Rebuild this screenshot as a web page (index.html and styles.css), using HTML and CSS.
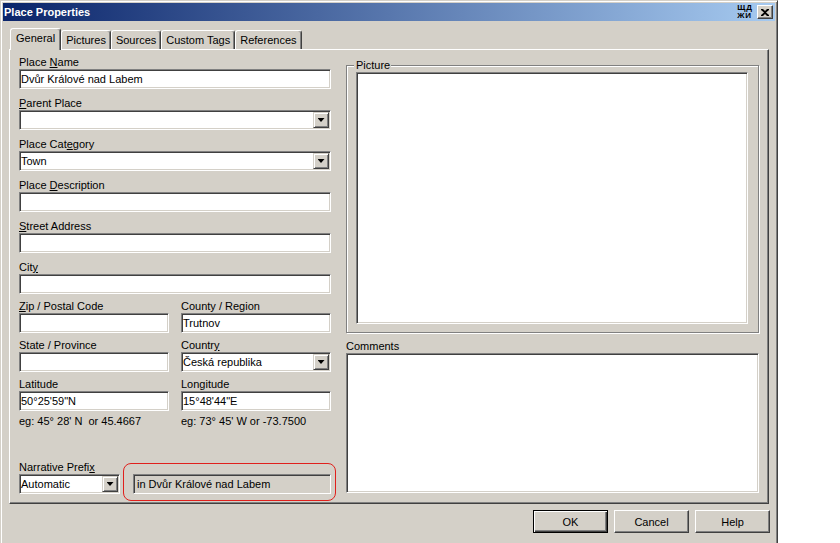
FILE: index.html
```
<!DOCTYPE html>
<html lang="en">

<head>
  <meta charset="UTF-8">
  <title>Place Properties</title>
  <link rel="stylesheet" href="styles.css">
</head>

<body>
  <div class="window">
    <div class="titlebar">
      <span class="title-text">Place Properties</span>
      <span class="ime"><span>ЩД</span><span>ЖИ</span></span>
      <span class="close-btn">
        <svg width="8" height="7" viewBox="0 0 8 7"><path d="M0 0h2l2 2 2-2h2v1L5 3.5 8 6v1H6L4 5 2 7H0V6l3-2.5L0 1z" fill="#000"/></svg>
      </span>
    </div>

    <div class="dialog-body">
      <div class="tabs">
        <div class="tab tab-active">General</div>
        <div class="tab">Pictures</div>
        <div class="tab">Sources</div>
        <div class="tab">Custom Tags</div>
        <div class="tab">References</div>
      </div>

      <div class="panel">
        <div class="col-left">
          <div class="field">
            <span class="label">Place <u>N</u>ame</span>
            <input class="edit" type="text" value="Dvůr Králové nad Labem">
          </div>
          <div class="field">
            <span class="label"><u>P</u>arent Place</span>
            <div class="combo"><span class="combo-value"></span><span class="drop"></span></div>
          </div>
          <div class="field">
            <span class="label">Place Cat<u>e</u>gory</span>
            <div class="combo"><span class="combo-value">Town</span><span class="drop"></span></div>
          </div>
          <div class="field">
            <span class="label">Place <u>D</u>escription</span>
            <input class="edit" type="text" value="">
          </div>
          <div class="field">
            <span class="label"><u>S</u>treet Address</span>
            <input class="edit" type="text" value="">
          </div>
          <div class="field">
            <span class="label">Cit<u>y</u></span>
            <input class="edit" type="text" value="">
          </div>

          <div class="pair">
            <div class="half">
              <span class="label"><u>Z</u>ip / Postal Code</span>
              <input class="edit" type="text" value="">
            </div>
            <div class="half">
              <span class="label">County / Region</span>
              <input class="edit" type="text" value="Trutnov">
            </div>
          </div>
          <div class="pair">
            <div class="half">
              <span class="label">State / Province</span>
              <input class="edit" type="text" value="">
            </div>
            <div class="half">
              <span class="label">Countr<u>y</u></span>
              <div class="combo"><span class="combo-value">Česká republika</span><span class="drop"></span></div>
            </div>
          </div>
          <div class="pair">
            <div class="half">
              <span class="label">Latitude</span>
              <input class="edit" type="text" value="50°25'59&quot;N">
            </div>
            <div class="half">
              <span class="label">Longitude</span>
              <input class="edit" type="text" value="15°48'44&quot;E">
            </div>
          </div>
          <div class="pair hint">
            <span class="half">eg: 45° 28' N&nbsp; or 45.4667</span>
            <span class="half">eg: 73° 45' W or -73.7500</span>
          </div>

          <div class="narr-row">
            <div class="narr-field">
              <span class="label">Narrative Prefi<u>x</u></span>
              <div class="combo"><span class="combo-value">Automatic</span><span class="drop"></span></div>
            </div>
            <div class="highlight">
              <div class="prefix-box">in Dvůr Králové nad Labem</div>
            </div>
          </div>
        </div>

        <div class="col-right">
          <div class="group">
            <div class="group-title">Picture</div>
            <div class="picture"></div>
          </div>
          <span class="label comments-label">Comments</span>
          <div class="memo"></div>
        </div>
      </div>

      <div class="buttons">
        <button class="btn btn-default">OK</button>
        <button class="btn">Cancel</button>
        <button class="btn">Help</button>
      </div>
    </div>
  </div>
</body>

</html>
```

FILE: styles.css
```
body {
  margin: 0;
  background: #fff;
  font-family: "Liberation Sans", Arial, sans-serif;
  font-size: 11px;
  color: #000;
  overflow: hidden;
}

.window {
  width: 778px;
  height: 560px;
  box-sizing: border-box;
  padding: 2px;
  background: #d4d0c8;
  border: 1px solid;
  border-color: #d4d0c8 #404040 #404040 #d4d0c8;
  box-shadow: inset 1px 1px #fff, inset -1px -1px #808080;
}

.titlebar {
  height: 18px;
  display: flex;
  align-items: center;
  padding-left: 1px;
  background: linear-gradient(90deg, #0a246a, #a6caf0);
  color: #fff;
  font-weight: bold;
}

.title-text {
  flex: 1;
}

.ime {
  display: flex;
  flex-direction: column;
  font-size: 8px;
  line-height: 8px;
  letter-spacing: 1px;
  color: #000;
}

.close-btn {
  width: 16px;
  height: 14px;
  margin: 0 2px 0 4px;
  box-sizing: border-box;
  display: flex;
  align-items: center;
  justify-content: center;
  background: #d4d0c8;
  border: 1px solid;
  border-color: #fff #404040 #404040 #fff;
  box-shadow: inset -1px -1px #808080;
}

.dialog-body {
  padding: 9px 6px 0 6px;
}

/* tabs */
.tabs {
  display: flex;
  align-items: flex-end;
  height: 19px;
  padding-left: 1px;
}

.tab {
  box-sizing: border-box;
  height: 19px;
  padding: 0 4px;
  line-height: 18px;
  border: 1px solid;
  border-bottom: 0;
  border-color: #fff #404040 #404040 #fff;
  box-shadow: inset -1px 0 #808080;
  border-radius: 3px 3px 0 0;
  white-space: nowrap;
}

.tab-active {
  height: 22px;
  margin-bottom: -1px;
  padding: 0 5px;
  position: relative;
  z-index: 1;
  background: #d4d0c8;
}

.panel {
  box-sizing: border-box;
  height: 455px;
  display: flex;
  gap: 15px;
  padding: 0 9px;
  border: 1px solid;
  border-color: #fff #404040 #404040 #fff;
  box-shadow: inset -1px -1px #808080;
}

.col-left {
  width: 312px;
  flex-shrink: 0;
  display: flex;
  flex-direction: column;
  padding: 6px 0 2px;
}

.col-right {
  width: 413px;
  flex-shrink: 0;
  display: flex;
  flex-direction: column;
  padding: 15px 0 10px;
}

.label {
  display: block;
  height: 13px;
  line-height: 13px;
  white-space: nowrap;
}

.field + .field {
  margin-top: 8px;
}

.pair {
  display: flex;
  gap: 12px;
  margin-top: 6px;
}

.half {
  width: 150px;
  white-space: nowrap;
}

.hint {
  margin-top: 4px;
  line-height: 13px;
}

/* sunken controls */
.edit,
.combo,
.prefix-box,
.picture,
.memo {
  box-sizing: border-box;
  border: 1px solid;
  border-color: #808080 #fff #fff #808080;
  box-shadow: inset 1px 1px #404040, inset -1px -1px #d4d0c8;
  background: #fff;
}

.edit {
  display: block;
  width: 100%;
  height: 20px;
  margin: 0;
  padding: 0 1px;
  font: inherit;
  color: #000;
  outline: none;
}

.combo {
  display: flex;
  height: 20px;
  padding: 1px;
}

.combo-value {
  flex: 1;
  line-height: 16px;
  white-space: nowrap;
}

.drop {
  width: 16px;
  height: 16px;
  box-sizing: border-box;
  display: flex;
  align-items: center;
  justify-content: center;
  background: #d4d0c8;
  border: 1px solid;
  border-color: #d4d0c8 #404040 #404040 #d4d0c8;
  box-shadow: inset 1px 1px #fff, inset -1px -1px #808080;
}

.drop::after {
  content: "";
  width: 7px;
  height: 4px;
  background: #000;
  clip-path: polygon(0 0, 100% 0, 50% 100%);
}

.narr-row {
  display: flex;
  align-items: flex-end;
  margin-top: auto;
}

.narr-field {
  width: 101px;
  flex-shrink: 0;
  margin-bottom: 7px;
}

.highlight {
  flex-shrink: 0;
  margin-left: 3px;
  padding: 10px 4px 6px 9px;
  border: 1px solid #e0201c;
  border-radius: 8px;
}

.prefix-box {
  width: 198px;
  height: 20px;
  padding-left: 3px;
  line-height: 18px;
  background: #d4d0c8;
  white-space: nowrap;
}

/* picture group */
.group {
  border: 1px solid #808080;
  box-shadow: inset 1px 1px #fff, 1px 1px 0 #fff;
  padding-bottom: 8px;
}

.group-title {
  width: fit-content;
  margin: -7px 0 0 7px;
  padding: 0 1px 0 2px;
  line-height: 13px;
  background: #d4d0c8;
}

.picture {
  height: 252px;
  margin: 0 10px 0 9px;
}

.comments-label {
  margin-top: 7px;
}

.memo {
  flex: 1;
}

/* buttons */
.buttons {
  display: flex;
  justify-content: flex-end;
  gap: 6px;
  margin: 6px -1px 0 0;
}

.btn {
  width: 75px;
  height: 23px;
  box-sizing: border-box;
  padding: 0;
  font: inherit;
  color: #000;
  background: #d4d0c8;
  border: 1px solid;
  border-color: #fff #404040 #404040 #fff;
  box-shadow: inset -1px -1px #808080;
}

.btn-default {
  border-color: #000;
  box-shadow: inset 1px 1px #fff, inset -1px -1px #404040, inset -2px -2px #808080;
}
```
